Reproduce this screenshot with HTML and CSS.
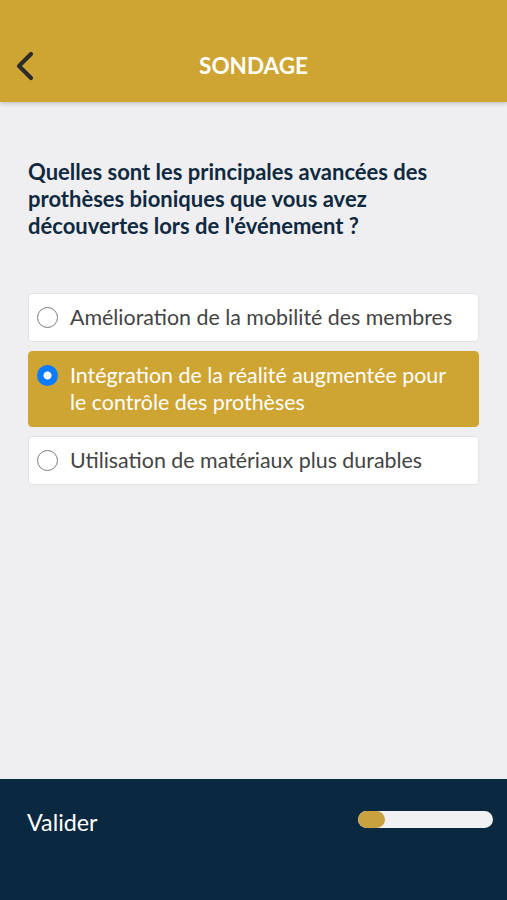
FILE: index.html
```html
<!DOCTYPE html>
<html lang="fr">
<head>
<meta charset="utf-8">
<title>Sondage</title>
<link rel="stylesheet" href="styles.css">
</head>
<body>
<div class="app">
  <header class="header">
    <button class="back" aria-label="Retour">
      <svg width="20" height="30" viewBox="0 0 20 30"><path d="M16 3 L4 15 L16 27" fill="none" stroke="#2b2b2b" stroke-width="4.2" stroke-linecap="round" stroke-linejoin="round"/></svg>
    </button>
    <h1 class="title">SONDAGE</h1>
  </header>
  <main class="content">
    <h2 class="question">Quelles sont les principales avancées des prothèses bioniques que vous avez découvertes lors de l'événement ?</h2>
    <div class="options">
      <label class="option">
        <span class="radio"></span>
        <span class="label">Amélioration de la mobilité des membres</span>
      </label>
      <label class="option selected">
        <span class="radio checked"></span>
        <span class="label">Intégration de la réalité augmentée pour le contrôle des prothèses</span>
      </label>
      <label class="option">
        <span class="radio"></span>
        <span class="label">Utilisation de matériaux plus durables</span>
      </label>
    </div>
  </main>
  <footer class="footer">
    <span class="validate">Valider</span>
    <div class="progress"><div class="progress-fill" style="width:20%"></div></div>
  </footer>
</div>
</body>
</html>
```

FILE: styles.css
```css
* { box-sizing: border-box; }
html, body { margin: 0; padding: 0; }
body {
  font-family: Lato, "Noto Sans", sans-serif;
  background: #efeff1;
}
.app {
  width: 507px;
  height: 900px;
  display: flex;
  flex-direction: column;
  background: #efeff1;
}
.header {
  height: 102px;
  background: #cea433;
  display: flex;
  align-items: center;
  justify-content: center;
  padding-top: 28px;
  position: relative;
  box-shadow: 0 2px 4px rgba(0,0,0,0.18);
  z-index: 1;
}
.back {
  position: absolute;
  left: 15px;
  top: 51px;
  border: 0;
  background: none;
  padding: 0;
  width: 22px;
  height: 30px;
  display: flex;
}
.title {
  margin: 0;
  color: #fff;
  font-size: 22.5px;
  font-weight: 700;
  letter-spacing: 0;
}
.content {
  flex: 1;
  padding: 56px 28px 0 28px;
}
.question {
  margin: 0;
  max-width: 420px;
  font-size: 22px;
  line-height: 27px;
  font-weight: 700;
  color: #0f2a40;
}
.options {
  margin-top: 54px;
  display: flex;
  flex-direction: column;
  gap: 9px;
  width: 451px;
}
.option {
  display: flex;
  align-items: center;
  background: #fff;
  border: 1px solid #e2e2e4;
  border-radius: 4px;
  padding: 10px 20px 10px 8px;
  min-height: 49px;
}
.option.selected {
  background: #cea433;
  border-color: #cea433;
  align-items: flex-start;
  padding-top: 10px;
  padding-bottom: 10px;
}
.radio {
  flex: none;
  width: 21px;
  height: 21px;
  border-radius: 50%;
  border: 1.6px solid #7a7a7a;
  margin-right: 12px;
  background: #fff;
}
.radio.checked {
  border: 0;
  background: radial-gradient(circle, #fff 0 3.6px, #0a7aff 4.4px);
  margin-top: 3px;
}
.label {
  font-size: 21.4px;
  line-height: 27px;
  color: #444;
}
.selected .label { color: #fff; }
.footer {
  height: 121px;
  background: #0a2940;
  display: flex;
  align-items: flex-start;
  justify-content: space-between;
  padding: 29px 14px 0 27px;
}
.validate {
  color: #fff;
  font-size: 23.3px;
  line-height: 28px;
}
.progress {
  margin-top: 3px;
  width: 135px;
  height: 17px;
  border-radius: 9px;
  background: #f1f1f3;
  overflow: hidden;
}
.progress-fill {
  height: 100%;
  background: #c9a13e;
  border-radius: 9px;
}
```
